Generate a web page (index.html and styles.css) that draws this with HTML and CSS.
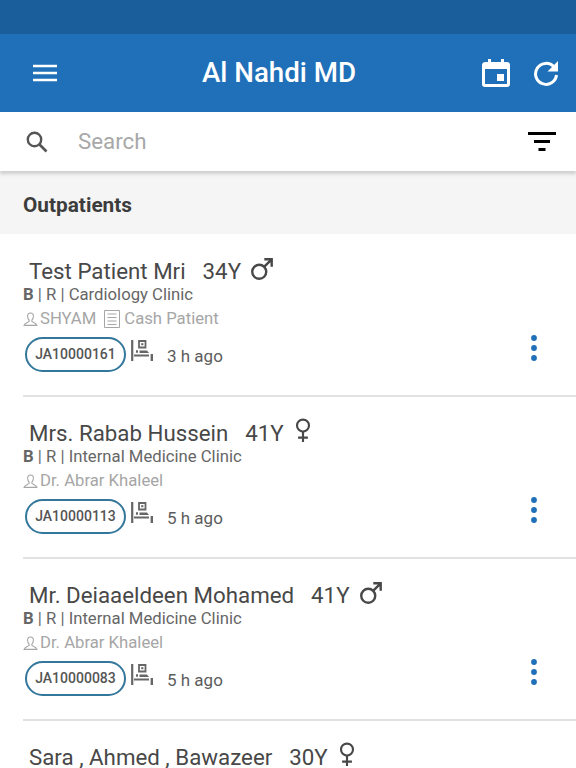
FILE: index.html
```html
<!DOCTYPE html>
<html lang="en">
<head>
<meta charset="utf-8">
<title>Al Nahdi MD</title>
<link rel="stylesheet" href="styles.css">
</head>
<body>
<svg class="defs" width="0" height="0" aria-hidden="true">
  <defs>
    <symbol id="male" viewBox="0 0 26 26"><circle cx="10" cy="16" r="7.6" fill="none" stroke="currentColor" stroke-width="2.6"/><path d="M15.5 10.5 23.5 2.5M15.5 2.5h8v8" fill="none" stroke="currentColor" stroke-width="2.6"/></symbol>
    <symbol id="female" viewBox="0 0 20 28"><circle cx="10" cy="8.5" r="6.7" fill="none" stroke="currentColor" stroke-width="2.4"/><path d="M10 15v12M4.5 22h11" fill="none" stroke="currentColor" stroke-width="2.4"/></symbol>
    <symbol id="person" viewBox="0 0 14 14"><path d="M7 1C5.200 1 4.300 2.300 4.300 4c0 1.500.6 2.700 1.400 3.500v1.300C4.500 10 1.800 10.300 1 12.500h12c-.8-2.200-3.500-2.500-4.700-3.700V7.500C9.100 6.700 9.700 5.500 9.700 4 9.700 2.300 8.800 1 7 1Z" fill="none" stroke="currentColor" stroke-width="1"/></symbol>
    <symbol id="bed" viewBox="0 0 22 22"><path d="M1.200 0v21" stroke="currentColor" stroke-width="2.200" fill="none"/><path d="M8 1h6.500v6.500H8Z" stroke="currentColor" stroke-width="1.800" fill="none"/><path d="M10.200 4.200h2.200" stroke="currentColor" stroke-width="2" fill="none"/><path d="M5 11.500h2" stroke="currentColor" stroke-width="2.400" fill="none"/><path d="M8.500 10.500h7.500l2 2.500H8.500Z" fill="currentColor"/><path d="M3 15.500h15" stroke="currentColor" stroke-width="2" fill="none"/><path d="M20.800 14v7" stroke="currentColor" stroke-width="2.400" fill="none"/></symbol>
  </defs>
</svg>
<main class="app">
  <div class="status"></div>
  <header class="topbar">
    <svg class="menu-icon" viewBox="0 0 24 18" aria-hidden="true"><path d="M0 2h24M0 9h24M0 16h24" stroke="#fff" stroke-width="2.400"/></svg>
    <h1 class="title">Al Nahdi MD</h1>
    <svg class="cal-icon" viewBox="0 0 28 28" aria-hidden="true"><path d="M6 0h3v3h10V0h3v3h2.500A3 3 0 0 1 28 5.500V25a3 3 0 0 1-3 3H3a3 3 0 0 1-3-3V5.500A3 3 0 0 1 3 3h3ZM3 10v15h22V10Z" fill="#fff"/><rect x="15" y="15" width="7" height="7" fill="#fff"/></svg>
    <svg class="refresh-icon" viewBox="0 0 26 26" aria-hidden="true"><path d="M21 7A10.500 10.500 0 1 0 23.500 15" fill="none" stroke="#fff" stroke-width="3"/><path d="M25 1v10.500H14.500Z" fill="#fff"/></svg>
  </header>
  <div class="searchbar">
    <svg class="search-icon" viewBox="0 0 22 22" aria-hidden="true"><circle cx="8.500" cy="8.500" r="6.700" fill="none" stroke="#555" stroke-width="2.400"/><path d="M13.500 13.500 20.500 20.500" stroke="#555" stroke-width="2.600"/></svg>
    <span class="search-text">Search</span>
    <svg class="filter-icon" viewBox="0 0 28 19" aria-hidden="true"><path d="M0 1.500h28M6 9.500h16M10.500 17.500h7" stroke="#000" stroke-width="3"/></svg>
  </div>
  <h2 class="section">Outpatients</h2>
  <ul class="list">
    <li class="item">
      <div class="info">
        <div class="name-row"><span>Test Patient Mri</span><span class="age">34Y</span><svg class="male"><use href="#male"/></svg></div>
        <div class="clinic"><b>B</b> | R | Cardiology Clinic</div>
        <div class="doctor"><svg class="person"><use href="#person"/></svg><span>SHYAM</span>
          <svg class="doc" viewBox="0 0 16 18" aria-hidden="true"><path d="M.5.500h15v17H.5ZM3.500 4h9M3.500 7.500h9M3.500 11h9M3.500 14.500h9" fill="none" stroke="currentColor"/></svg><span>Cash Patient</span></div>
        <div class="meta"><span class="pill">JA10000161</span><svg class="bed"><use href="#bed"/></svg><span class="time">3 h ago</span></div>
      </div>
      <svg class="dots" viewBox="0 0 6 26" aria-hidden="true"><circle cx="3" cy="3" r="2.900"/><circle cx="3" cy="13" r="2.900"/><circle cx="3" cy="23" r="2.900"/></svg>
    </li>
    <li class="item">
      <div class="info">
        <div class="name-row"><span>Mrs. Rabab Hussein</span><span class="age">41Y</span><svg class="female"><use href="#female"/></svg></div>
        <div class="clinic"><b>B</b> | R | Internal Medicine Clinic</div>
        <div class="doctor"><svg class="person"><use href="#person"/></svg><span>Dr. Abrar Khaleel</span></div>
        <div class="meta"><span class="pill">JA10000113</span><svg class="bed"><use href="#bed"/></svg><span class="time">5 h ago</span></div>
      </div>
      <svg class="dots" viewBox="0 0 6 26" aria-hidden="true"><circle cx="3" cy="3" r="2.900"/><circle cx="3" cy="13" r="2.900"/><circle cx="3" cy="23" r="2.900"/></svg>
    </li>
    <li class="item">
      <div class="info">
        <div class="name-row"><span>Mr. Deiaaeldeen Mohamed</span><span class="age">41Y</span><svg class="male"><use href="#male"/></svg></div>
        <div class="clinic"><b>B</b> | R | Internal Medicine Clinic</div>
        <div class="doctor"><svg class="person"><use href="#person"/></svg><span>Dr. Abrar Khaleel</span></div>
        <div class="meta"><span class="pill">JA10000083</span><svg class="bed"><use href="#bed"/></svg><span class="time">5 h ago</span></div>
      </div>
      <svg class="dots" viewBox="0 0 6 26" aria-hidden="true"><circle cx="3" cy="3" r="2.900"/><circle cx="3" cy="13" r="2.900"/><circle cx="3" cy="23" r="2.900"/></svg>
    </li>
    <li class="item">
      <div class="info">
        <div class="name-row"><span>Sara , Ahmed , Bawazeer</span><span class="age">30Y</span><svg class="female"><use href="#female"/></svg></div>
      </div>
    </li>
  </ul>
</main>
</body>
</html>
```
FILE: styles.css
```css
* { box-sizing: border-box; }
html, body { margin: 0; padding: 0; height: 100%; }
body { font-family: Roboto, "Liberation Sans", sans-serif; background: #fff; overflow: hidden; }
.defs { display: block; height: 0; }
.app { width: 576px; height: 768px; overflow: hidden; display: flex; flex-direction: column; }
.status { height: 34px; flex: none; background: #1a5e9b; }
.topbar { height: 78px; flex: none; background: #1f70b8; display: flex; align-items: center; padding: 0 17px 0 32px; }
.menu-icon { width: 26px; height: 18px; flex: none; }
.title { flex: 1; margin: 0; padding-left: 18px; color: #fff; font-size: 27.700px; font-weight: 500; text-align: center; line-height: 34px; }
.cal-icon { width: 28px; height: 28px; flex: none; margin-right: 23px; }
.refresh-icon { width: 26px; height: 26px; flex: none; }
.searchbar { height: 59px; flex: none; background: #fff; display: flex; align-items: center; padding: 0 20px 0 26px; box-shadow: 0 3px 3px #cfcfcf; position: relative; z-index: 1; }
.search-icon { width: 22px; height: 22px; flex: none; }
.search-text { flex: 1; margin: 0 0 2px 30px; color: #a8a8a8; font-size: 22.300px; }
.filter-icon { width: 28px; height: 19px; flex: none; }
.section { height: 63px; flex: none; margin: 0; padding: 5px 0 0 23px; background: #f5f5f5; color: #3c3c3c; font-size: 20.800px; font-weight: 700; line-height: 59px; }
.list { list-style: none; margin: 0; padding: 1px 0 0 23px; }
.item { height: 162px; display: flex; justify-content: space-between; border-bottom: 2px solid #e2e2e2; }
.item:last-child { border-bottom: 0; }
.info { padding-top: 21px; }
.name-row { display: flex; align-items: center; height: 30px; padding-left: 6px; color: #484848; font-size: 22.300px; line-height: 30px; white-space: nowrap; }
.age { margin-left: 17px; }
.male { width: 24px; height: 24px; margin: -5px 0 0 9px; }
.female { width: 18px; height: 25px; margin: -5px 0 0 10px; }
.clinic { height: 22px; margin-top: -2px; color: #666; font-size: 16.700px; line-height: 22px; }
.clinic b { font-weight: 700; color: #666; }
.doctor { display: flex; align-items: center; height: 24px; margin-top: 1px; color: #a6a6a6; font-size: 16.700px; line-height: 24px; }
.person { width: 15px; height: 15px; margin-right: 2px; }
.doc { width: 16px; height: 18px; margin: 0 4px 0 8px; }
.meta { display: flex; align-items: center; height: 36px; margin: 5px 0 0 2px; }
.pill { width: 101px; height: 35px; border: 2px solid #33779b; border-radius: 18px; color: #555; font-size: 14px; font-weight: 500; line-height: 31px; text-align: center; }
.bed { width: 22px; height: 22px; margin: -6px 0 0 5px; color: #666; }
.time { margin: 3px 0 0 14px; color: #5c5c5c; font-size: 17px; }
.dots { width: 6px; height: 26px; margin: 100px 39px 0 0; fill: #1f70b8; flex: none; }
```
